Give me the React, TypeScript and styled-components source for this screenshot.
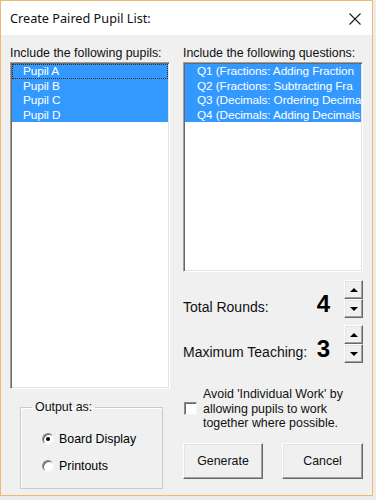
import React, { useState } from 'react';
import styled, { createGlobalStyle } from 'styled-components';

const GlobalStyle = createGlobalStyle`
  html, body {
    margin: 0;
    padding: 0;
    background: #ececec;
    width: 376px;
    height: 500px;
    overflow: hidden;
  }
  * {
    box-sizing: border-box;
  }
`;

const pupils = ['Pupil A', 'Pupil B', 'Pupil C', 'Pupil D'];
// the list is narrower than the captions, only the visible part is shown
const questions = [
  'Q1 (Fractions: Adding Fraction',
  'Q2 (Fractions: Subtracting Fra',
  'Q3 (Decimals: Ordering Decima',
  'Q4 (Decimals: Adding Decimals',
];

const App = () => {
  const [rounds, setRounds] = useState(4);
  const [teaching, setTeaching] = useState(3);
  const [output, setOutput] = useState('board');
  const [avoid, setAvoid] = useState(false);

  return (
    <>
      <GlobalStyle />
      <Window>
        <TitleBar>
          <Title>Create Paired Pupil List:</Title>
          <CloseBtn>
            <svg width="12" height="12" viewBox="0 0 12 12">
              <path d="M0.5 0.5 L11.5 11.5 M11.5 0.5 L0.5 11.5" stroke="#1a1a1a" strokeWidth="1.1" />
            </svg>
          </CloseBtn>
        </TitleBar>
        <Body>
          <LeftColumn>
            <Label>Include the following pupils:</Label>
            <ListBox height={327}>
              {pupils.map((p, i) => (
                <ListItem key={p} selected focused={i === 0}>
                  {p}
                </ListItem>
              ))}
            </ListBox>
            <GroupWrap>
              <GroupBox>
                <Legend>Output as:</Legend>
                <RadioList>
                  <RadioRow onClick={() => setOutput('board')}>
                    <Radio checked={output === 'board'} />
                    <span>Board Display</span>
                  </RadioRow>
                  <RadioRow onClick={() => setOutput('print')}>
                    <Radio checked={output === 'print'} />
                    <span>Printouts</span>
                  </RadioRow>
                </RadioList>
              </GroupBox>
            </GroupWrap>
          </LeftColumn>
          <RightColumn>
            <Label>Include the following questions:</Label>
            <ListBox height={210}>
              {questions.map((q) => (
                <ListItem key={q} selected indent={12}>
                  {q}
                </ListItem>
              ))}
            </ListBox>
            <SpinRow top={8}>
              <SpinLabel>Total Rounds:</SpinLabel>
              <BigNumber>{rounds}</BigNumber>
              <Spinner>
                <SpinButton onClick={() => setRounds(rounds + 1)}>
                  <Arrow up />
                </SpinButton>
                <SpinButton onClick={() => setRounds(Math.max(1, rounds - 1))}>
                  <Arrow />
                </SpinButton>
              </Spinner>
            </SpinRow>
            <SpinRow top={7}>
              <SpinLabel>Maximum Teaching:</SpinLabel>
              <BigNumber>{teaching}</BigNumber>
              <Spinner>
                <SpinButton onClick={() => setTeaching(teaching + 1)}>
                  <Arrow up />
                </SpinButton>
                <SpinButton onClick={() => setTeaching(Math.max(1, teaching - 1))}>
                  <Arrow />
                </SpinButton>
              </Spinner>
            </SpinRow>
            <CheckRow onClick={() => setAvoid(!avoid)}>
              <CheckBox>{avoid ? '✓' : ''}</CheckBox>
              <CheckText>
                Avoid 'Individual Work' by
                <br />
                allowing pupils to work
                <br />
                together where possible.
              </CheckText>
            </CheckRow>
            <ButtonRow>
              <PushButton>Generate</PushButton>
              <PushButton wide>Cancel</PushButton>
            </ButtonRow>
          </RightColumn>
        </Body>
      </Window>
    </>
  );
};
export default App;

const Window = styled.div`
  width: 373px;
  height: 496px;
  border: 1px solid #f1b96f;
  background: #f0f0f0;
  display: flex;
  flex-direction: column;
  font-family: 'Liberation Sans', Arial, sans-serif;
  font-size: 12.4px;
  color: #000;
`;

const TitleBar = styled.div`
  height: 34px;
  background: #fff;
  display: flex;
  align-items: center;
  justify-content: space-between;
  padding: 0 11px 0 9px;
  flex-shrink: 0;
`;

const Title = styled.div`
  font-family: 'Noto Sans', 'Open Sans', sans-serif;
  font-size: 12.7px;
  color: #111;
`;

const CloseBtn = styled.div`
  width: 12px;
  height: 12px;
  display: flex;
  margin-top: 1px;
`;

const Body = styled.div`
  display: flex;
  padding: 11px 0 0 9px;
  gap: 13px;
`;

const LeftColumn = styled.div`
  width: 160px;
  display: flex;
  flex-direction: column;
`;

const RightColumn = styled.div`
  width: 180px;
  display: flex;
  flex-direction: column;
`;

const Label = styled.div`
  line-height: 14px;
  height: 14px;
  white-space: nowrap;
  color: #111;
`;

const ListBox = styled.div<{ height: number }>`
  margin-top: 2px;
  height: ${(p) => p.height}px;
  background: #fff;
  border: 1px solid;
  border-color: #a0a0a0 #fff #fff #a0a0a0;
  box-shadow: inset 1px 1px #696969, inset -1px -1px #e3e3e3;
  padding: 1px;
  overflow: hidden;
`;

const ListItem = styled.div<{ selected?: boolean; focused?: boolean; indent?: number }>`
  height: 14.5px;
  line-height: 14.5px;
  font-size: 11.8px;
  letter-spacing: -0.1px;
  padding-left: ${(p) => p.indent ?? 11}px;
  white-space: nowrap;
  overflow: hidden;
  background: ${(p) => (p.selected ? '#3399ff' : 'transparent')};
  color: ${(p) => (p.selected ? '#fff' : '#000')};
  outline: ${(p) => (p.focused ? '1px dotted #3a2a10' : 'none')};
  outline-offset: -1px;
`;

const GroupWrap = styled.div`
  padding-left: 10px;
  margin-top: 11px;
`;

const GroupBox = styled.fieldset`
  margin: 0;
  width: 143px;
  height: 89px;
  border: 1px solid #c9c9c9;
  box-shadow: inset 1px 1px #fff;
  padding: 0 0 0 11px;
`;

const Legend = styled.legend`
  padding: 0 3px;
  line-height: 14px;
  color: #111;
`;

const RadioList = styled.div`
  margin: 17px 0 0 10px;
  display: flex;
  flex-direction: column;
  gap: 11px;
`;

const RadioRow = styled.div`
  display: flex;
  align-items: center;
  gap: 5px;
  height: 16px;
  cursor: default;
`;

const Radio = styled.div<{ checked?: boolean }>`
  width: 12px;
  height: 12px;
  border-radius: 50%;
  background: #fff;
  border: 1px solid;
  border-color: #8a8a8a #f4f4f4 #f4f4f4 #8a8a8a;
  box-shadow: inset 1px 1px #5a5a5a;
  display: flex;
  align-items: center;
  justify-content: center;
  &::after {
    content: '';
    width: 4px;
    height: 4px;
    border-radius: 50%;
    background: ${(p) => (p.checked ? '#000' : 'transparent')};
  }
`;

const SpinRow = styled.div<{ top: number }>`
  margin-top: ${(p) => p.top}px;
  height: 38px;
  display: flex;
  align-items: flex-end;
`;

const SpinLabel = styled.div`
  flex: 1;
  font-size: 14px;
  line-height: 16px;
  padding-bottom: 3px;
  color: #111;
  white-space: nowrap;
`;

const BigNumber = styled.div`
  font-family: 'Liberation Sans', Arial, sans-serif;
  font-weight: bold;
  font-size: 24px;
  line-height: 24px;
  padding-bottom: 2px;
  margin-right: 14px;
  color: #000;
`;

const Spinner = styled.div`
  display: flex;
  flex-direction: column;
  align-self: stretch;
`;

const SpinButton = styled.div`
  width: 19px;
  height: 19px;
  background: #f0f0f0;
  border: 1px solid;
  border-color: #fff #696969 #696969 #fff;
  box-shadow: inset -1px -1px #a0a0a0, inset 1px 1px #e3e3e3;
  display: flex;
  align-items: center;
  justify-content: center;
`;

const Arrow = styled.div<{ up?: boolean }>`
  width: 0;
  height: 0;
  border-left: 4px solid transparent;
  border-right: 4px solid transparent;
  ${(p) => (p.up ? 'border-bottom: 4px solid #000;' : 'border-top: 4px solid #000;')}
`;

const CheckRow = styled.div`
  margin-top: 24px;
  display: flex;
  align-items: center;
  gap: 6px;
  padding-left: 1px;
`;

const CheckBox = styled.div`
  width: 13px;
  height: 13px;
  flex-shrink: 0;
  background: #fff;
  border: 1px solid;
  border-color: #8a8a8a #f4f4f4 #f4f4f4 #8a8a8a;
  box-shadow: inset 1px 1px #6a6a6a;
  font-size: 10px;
  line-height: 11px;
  text-align: center;
`;

const CheckText = styled.div`
  line-height: 14.5px;
  color: #111;
`;

const ButtonRow = styled.div`
  margin-top: 12px;
  display: flex;
  gap: 19px;
`;

const PushButton = styled.div<{ wide?: boolean }>`
  width: ${(p) => (p.wide ? 81 : 80)}px;
  height: 36px;
  background: #f0f0f0;
  border: 1px solid;
  border-color: #fff #696969 #696969 #fff;
  box-shadow: inset -1px -1px #a0a0a0, inset 1px 1px #e3e3e3;
  display: flex;
  align-items: center;
  justify-content: center;
  color: #111;
  cursor: default;
`;
